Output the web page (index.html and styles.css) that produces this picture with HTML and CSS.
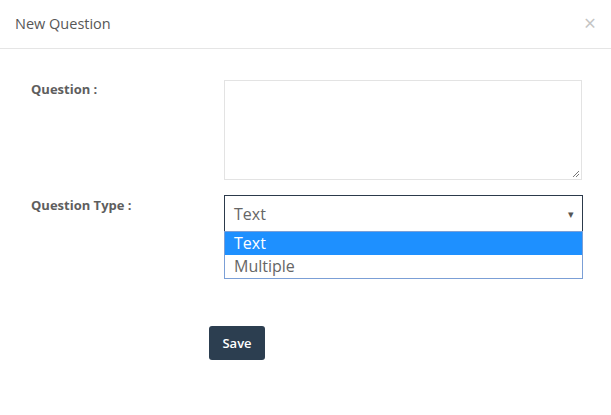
FILE: index.html
```html
<!DOCTYPE html>
<html>
<head>
<meta charset="utf-8">
<link rel="stylesheet" href="styles.css">
</head>
<body>
<div class="modal">
  <div class="modal-header">
    <span class="modal-title">New Question</span>
    <span class="close">×</span>
  </div>
  <div class="modal-body">
    <div class="form-row">
      <label class="form-label">Question :</label>
      <div class="textarea-box">
        <svg class="grip" width="8" height="8" viewBox="0 0 8 8"><path d="M7 1L1 7M7 4L4 7" stroke="#777" stroke-width="1" fill="none"/></svg>
      </div>
    </div>
    <div class="form-row type-row">
      <label class="form-label">Question Type :</label>
      <div class="select-wrap">
        <div class="select">
          <span>Text</span>
          <span class="arrow">▾</span>
        </div>
        <div class="dropdown">
          <div class="option selected">Text</div>
          <div class="option">Multiple</div>
        </div>
      </div>
    </div>
    <div class="actions">
      <button class="btn-save">Save</button>
    </div>
  </div>
</div>
</body>
</html>
```

FILE: styles.css
```css
html, body {
  margin: 0;
  padding: 0;
  background: #fff;
  font-family: "Open Sans", "Liberation Sans", sans-serif;
}
.modal {
  width: 611px;
  height: 415px;
  background: #fff;
}
.modal-header {
  border-bottom: 1px solid #e5e5e5;
  display: flex;
  align-items: center;
  justify-content: space-between;
  padding: 0 15px 2px 15px;
  box-sizing: content-box;
  height: 46px;
}
.modal-title {
  font-size: 14.5px;
  color: #575757;
}
.close {
  font-size: 21px;
  color: #c4c4c4;
  margin-right: 0;
  line-height: 1;
}
.modal-body {
  padding: 31px 0 0 31px;
}
.form-row {
  display: flex;
}
.form-label {
  width: 193px;
  font-size: 13px;
  font-weight: 700;
  color: #5e5e5e;
  padding-top: 0;
  line-height: 18px;
}
.textarea-box {
  width: 356px;
  height: 98px;
  border: 1px solid #e3e3e3;
  position: relative;
}
.grip {
  position: absolute;
  right: 1px;
  bottom: 1px;
}
.type-row {
  margin-top: 15px;
}
.type-row .form-label {
  padding-top: 1px;
}
.select-wrap {
  position: relative;
  width: 359px;
}
.select {
  height: 35px;
  border: 1px solid #2c3a4b;
  display: flex;
  align-items: center;
  justify-content: space-between;
  padding: 0 8px 0 9px;
  font-size: 16px;
  color: #666;
}
.arrow {
  font-size: 11px;
  color: #555;
}
.dropdown {
  position: absolute;
  left: 0;
  right: 0;
  top: 36px;
  border: 1px solid #7b9fd6;
  background: #fff;
}
.option {
  height: 23px;
  line-height: 22px;
  padding-left: 9px;
  font-size: 16px;
  color: #666;
}
.option.selected {
  background: #1e90ff;
  color: #fff;
}
.actions {
  margin-top: 94px;
  padding-left: 178px;
}
.btn-save {
  width: 56px;
  height: 34px;
  border: none;
  border-radius: 3px;
  background: #2c3e50;
  color: #fff;
  font-family: "Open Sans", "Liberation Sans", sans-serif;
  font-size: 13px;
  font-weight: 600;
  padding: 0;
}
```
